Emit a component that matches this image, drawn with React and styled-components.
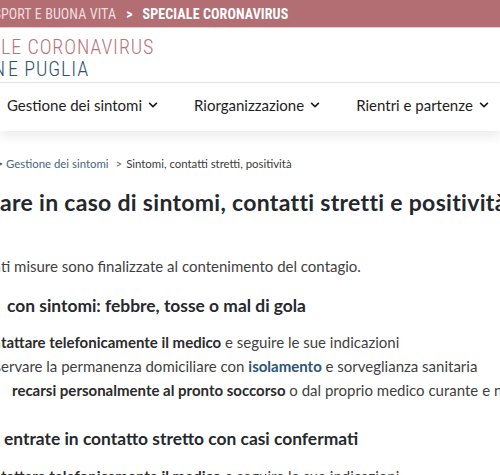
import React from "react";
import styled, { createGlobalStyle } from "styled-components";
import { FaChevronDown } from "react-icons/fa";

const GlobalStyle = createGlobalStyle`
  body {
    margin: 0;
    background: #fff;
    font-family: "Lato", "Noto Sans", sans-serif;
    color: #3f3f3f;
  }
`;

// the page is scrolled sideways: the start of each line lies left of the window
const Hidden = styled.span`
  display: inline-flex;
  width: 0;
  justify-content: flex-end;
  white-space: nowrap;
`;

const HiddenText = styled.span`
  flex: none;
  margin-right: ${(p) => p.$gap || 0}px;
`;

function Cut({ text, gap }) {
  return (
    <Hidden>
      <HiddenText $gap={gap}>{text}</HiddenText>
    </Hidden>
  );
}

const Page = styled.div`
  width: 500px;
  height: 475px;
  overflow: hidden;
`;

const TopBar = styled.div`
  height: 27px;
  background: #b26e73;
  border-bottom: 1px solid #e9c7ca;
  display: flex;
  align-items: center;
  padding-left: ${(p) => p.$x}px;
  white-space: nowrap;
  font-family: "Roboto Condensed", "Lato", sans-serif;
  font-size: 14px;
  letter-spacing: 0.1px;
  text-transform: uppercase;
  color: #f3dcde;
`;

const TopCurrent = styled.span`
  color: #fff;
  font-weight: 700;
`;

const Sep = styled.span`
  color: #fff;
  font-weight: 700;
  margin: 0 10px;
`;

const Header = styled.header`
  padding: 8px 0 2px;
  border-bottom: 1px solid #e5e5e5;
`;

const TitleLine = styled.div`
  font-family: "Roboto Condensed", "Lato", sans-serif;
  font-size: 20px;
  font-weight: 300;
  line-height: 22px;
  letter-spacing: 0.9px;
  white-space: nowrap;
  padding-left: ${(p) => p.$x}px;
  color: ${(p) => (p.$accent ? "#b5767b" : "#2f5370")};
`;

const Nav = styled.nav`
  height: 48px;
  padding-bottom: 4px;
  box-sizing: border-box;
  display: flex;
  align-items: center;
  gap: 36px;
  padding-left: 7px;
  background: #fff;
  box-shadow: 0 6px 10px rgba(0, 0, 0, 0.07);
  position: relative;
  white-space: nowrap;
`;

const NavItem = styled.div`
  display: flex;
  align-items: center;
  gap: 6px;
  font-size: 15px;
  color: #1d1d1d;
  flex-shrink: 0;
  svg {
    width: 10px;
    height: 10px;
  }
`;

const Main = styled.main`
  padding-top: 24px;
`;

const Crumbs = styled.div`
  font-size: 11.4px;
  line-height: 18px;
  white-space: nowrap;
  padding-left: ${(p) => p.$x}px;
  color: #3a3a3a;
`;

const CrumbLink = styled.span`
  color: #46667f;
`;

const CrumbSep = styled.span`
  color: #666;
  margin: 0 4px 0 7px;
`;

const Title = styled.h1`
  margin: 15px 0 0;
  font-size: 23px;
  line-height: 28px;
  letter-spacing: 0.3px;
  font-weight: 700;
  color: #24282d;
  white-space: nowrap;
  padding-left: ${(p) => p.$x}px;
`;

const Lead = styled.p`
  margin: 38px 0 0;
  font-size: 15px;
  line-height: 24px;
  white-space: nowrap;
  padding-left: ${(p) => p.$x}px;
`;

const SubTitle = styled.h3`
  margin: ${(p) => p.$top}px 0 0;
  font-size: 17.4px;
  line-height: 24px;
  font-weight: 700;
  color: #26292d;
  white-space: nowrap;
  padding-left: ${(p) => p.$x}px;
`;

const List = styled.ul`
  list-style: none;
  margin: ${(p) => p.$top}px 0 0;
  padding: 0;
`;

const Item = styled.li`
  font-size: 15px;
  line-height: 24px;
  white-space: nowrap;
  padding-left: ${(p) => p.$x}px;
  strong {
    color: #2b2b2b;
    font-weight: 700;
  }
`;

const Link = styled.strong`
  && {
    color: #2c5574;
  }
`;

const menu = ["Gestione dei sintomi", "Riorganizzazione", "Rientri e partenze"];

export default function App() {
  return (
    <Page>
      <GlobalStyle />
      <TopBar $x={1}>
        <Cut text="Salute, s" />
        port e buona vita
        <Sep>&gt;</Sep>
        <TopCurrent>Speciale Coronavirus</TopCurrent>
      </TopBar>
      <Header>
        <TitleLine $accent $x={1}>
          <Cut text="SPECIA" />
          LE CORONAVIRUS
        </TitleLine>
        <TitleLine $x={8}>
          <Cut text="REGION" gap={2} />
          E PUGLIA
        </TitleLine>
      </Header>
      <Nav>
        {menu.map((m) => (
          <NavItem key={m}>
            {m}
            <FaChevronDown />
          </NavItem>
        ))}
      </Nav>
      <Main>
        <Crumbs $x={6}>
          <Cut text="Speciale Coronavirus  >" gap={3} />
          <CrumbLink>Gestione dei sintomi</CrumbLink>
          <CrumbSep>&gt;</CrumbSep>
          Sintomi, contatti stretti, positività
        </Crumbs>
        <Title $x={0}>
          <Cut text="Cosa f" />
          are in caso di sintomi, contatti stretti e positività
        </Title>
        <Lead $x={1}>
          <Cut text="Le seguen" />
          ti misure sono finalizzate al contenimento del contagio.
        </Lead>
        <SubTitle $top={16} $x={7}>
          <Cut text="Persone" gap={10} />
          con sintomi: febbre, tosse o mal di gola
        </SubTitle>
        <List $top={12}>
          <Item $x={1}>
            <Cut text="Con" />
            <strong>tattare telefonicamente il medico</strong> e seguire le sue indicazioni
          </Item>
          <Item $x={1}>
            <Cut text="Oss" />
            ervare la permanenza domiciliare con <Link>isolamento</Link> e sorveglianza sanitaria
          </Item>
          <Item $x={12}>
            <Cut text="Non" gap={14} />
            <strong>recarsi personalmente al pronto soccorso</strong> o dal proprio medico curante e non uscire di casa
          </Item>
        </List>
        <SubTitle $top={25} $x={4}>
          <Cut text="Persone" gap={10} />
          entrate in contatto stretto con casi confermati
        </SubTitle>
        <List $top={13}>
          <Item $x={1}>
            <Cut text="Con" />
            <strong>tattare telefonicamente il medico</strong> e seguire le sue indicazioni
          </Item>
        </List>
      </Main>
    </Page>
  );
}
